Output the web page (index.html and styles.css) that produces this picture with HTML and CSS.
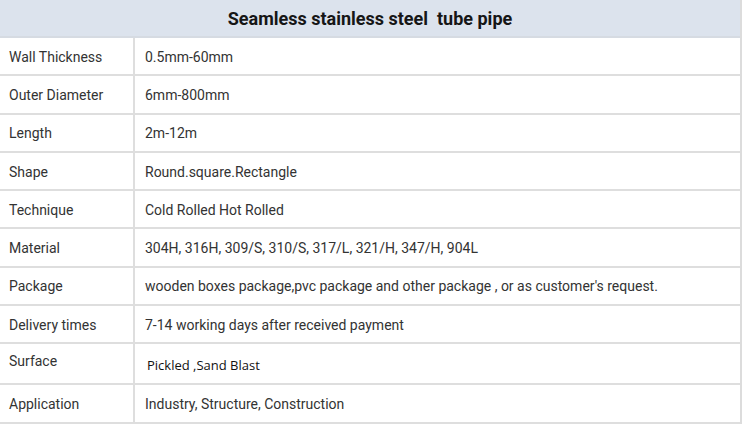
FILE: index.html
```html
<!DOCTYPE html>
<html>
<head>
<meta charset="utf-8">
<link rel="stylesheet" href="styles.css">
</head>
<body>
<div class="spec">
  <div class="title">Seamless stainless steel&nbsp; tube pipe</div>
  <div class="row"><div class="k">Wall Thickness</div><div class="v">0.5mm-60mm</div></div>
  <div class="row"><div class="k">Outer Diameter</div><div class="v">6mm-800mm</div></div>
  <div class="row"><div class="k">Length</div><div class="v">2m-12m</div></div>
  <div class="row"><div class="k">Shape</div><div class="v">Round.square.Rectangle</div></div>
  <div class="row"><div class="k">Technique</div><div class="v">Cold Rolled Hot Rolled</div></div>
  <div class="row"><div class="k">Material</div><div class="v">304H, 316H, 309/S, 310/S, 317/L, 321/H, 347/H, 904L</div></div>
  <div class="row"><div class="k">Package</div><div class="v">wooden boxes package,pvc package and other package , or as customer's request.</div></div>
  <div class="row"><div class="k">Delivery times</div><div class="v">7-14 working days after received payment</div></div>
  <div class="row tall"><div class="k up">Surface</div><div class="v alt">Pickled ,Sand Blast</div></div>
  <div class="row"><div class="k">Application</div><div class="v">Industry, Structure, Construction</div></div>
</div>
</body>
</html>
```

FILE: styles.css
```css
html, body {
  margin: 0;
  padding: 0;
  background: #ffffff;
}
.spec {
  width: 740px;
  border-right: 2px solid #dcdcdc;
  font-family: Roboto, "Liberation Sans", sans-serif;
  color: #333333;
  font-size: 14px;
}
.title {
  height: 36px;
  background: #dce3ed;
  border-bottom: 2px solid #d6dbe2;
  display: flex;
  align-items: center;
  justify-content: center;
  font-weight: bold;
  font-size: 18px;
  color: #161616;
}
.row {
  display: grid;
  grid-template-columns: 135px 1fr;
  height: 36.3px;
  border-bottom: 2px solid #dedede;
}
.row.tall {
  height: 39px;
}
.k, .v {
  display: flex;
  align-items: center;
  padding-top: 1px;
}
.k {
  padding-left: 9px;
  border-right: 2px solid #dedede;
}
.v {
  padding-left: 10px;
}
.k.up {
  padding-top: 0;
  padding-bottom: 5px;
}
.v.alt {
  font-family: "Open Sans", "Noto Sans", sans-serif;
  font-size: 13px;
  color: #111111;
  padding-left: 12px;
  padding-top: 2px;
}
```
